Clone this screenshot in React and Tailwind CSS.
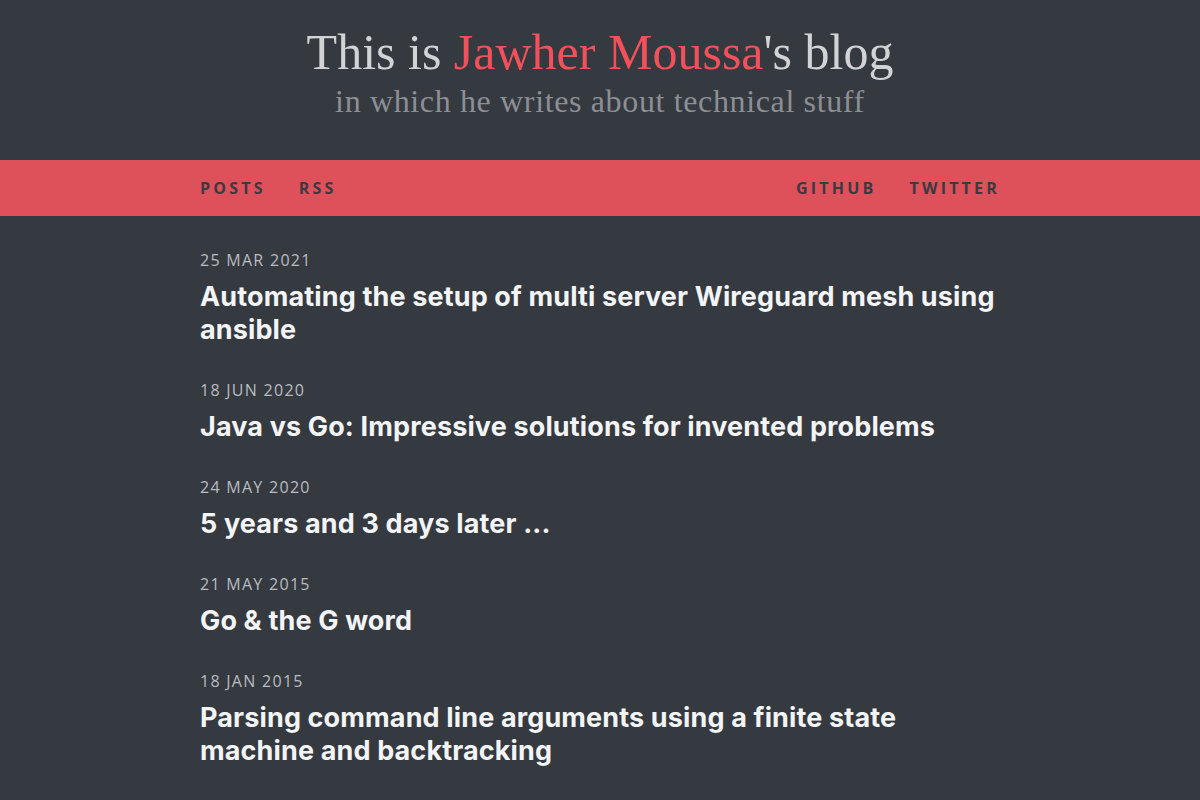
import React from 'react';

const posts = [
  { date: '25 Mar 2021', title: 'Automating the setup of multi server Wireguard mesh using ansible' },
  { date: '18 Jun 2020', title: 'Java vs Go: Impressive solutions for invented problems' },
  { date: '24 May 2020', title: '5 years and 3 days later ...' },
  { date: '21 May 2015', title: 'Go & the G word' },
  { date: '18 Jan 2015', title: 'Parsing command line arguments using a finite state machine and backtracking' },
];

const App = () => {
  return (
    <div className="min-h-screen bg-[#353940] pb-16">
      {/* Header */}
      <header className="pt-[25px] text-center font-['Liberation_Serif',serif]">
        <h1 className="text-[50px] leading-[54px] text-[#d2d3d5]">
          This is <span className="text-[#f2505a]">Jawher Moussa</span>'s blog
        </h1>
        <p className="mt-[2px] text-[32px] leading-[40px] tracking-[0.02em] text-[#8c8f94]">
          in which he writes about technical stuff
        </p>
      </header>

      {/* Nav */}
      <nav className="mt-[39px] h-[56px] bg-[#de505a]">
        <div className="mx-auto flex h-full w-[800px] items-center justify-between font-['Open_Sans',sans-serif] text-[16px] leading-none font-bold tracking-[0.2em] text-[#3a3a42]">
          <div className="flex gap-[33px]">
            <a>POSTS</a>
            <a>RSS</a>
          </div>
          <div className="flex gap-[33px]">
            <a>GITHUB</a>
            <a>TWITTER</a>
          </div>
        </div>
      </nav>

      {/* Post list */}
      <main className="mx-auto mt-[32px] w-[800px]">
        {posts.map((p) => (
          <article key={p.date} className="mb-[32px]">
            <div className="font-['Open_Sans',sans-serif] text-[16px] leading-[24px] uppercase tracking-[0.08em] text-[#b9bcc1]">
              {p.date}
            </div>
            <h2 className="mt-[8px] font-['Inter',sans-serif] text-[27px] leading-[33px] font-bold tracking-[0.005em] text-[#f3f4f5]">
              {p.title}
            </h2>
          </article>
        ))}
      </main>
    </div>
  );
};

export default App;
